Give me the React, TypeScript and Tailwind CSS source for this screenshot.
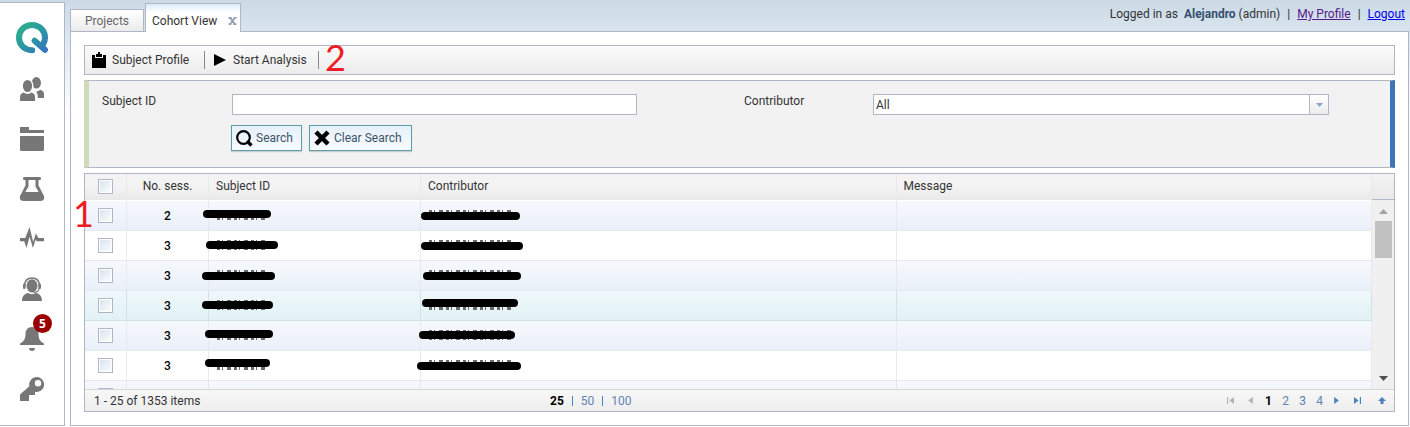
import type { ReactNode } from 'react';

type Mark = { left: number; top: number; width: number };
type Row = { sessions?: number; tone: string; subject?: Mark; contributor?: Mark };

const stripe = 'border-[#e6e9ee] bg-linear-to-b from-[#f5f9fd] to-[#eaf0f9]';
const plain = 'border-[#e9e9e9] bg-white';
const hovered = 'border-[#cfe3e6] bg-linear-to-b from-[#eff8fa] to-[#e1f1f5]';

// mark positions are relative to the top left corner of the cell
const rows: Row[] = [
  { sessions: 2, tone: stripe, subject: { left: -6, top: 9, width: 68 }, contributor: { left: 0, top: 11, width: 99 } },
  { sessions: 3, tone: plain, subject: { left: -3, top: 10, width: 72 }, contributor: { left: 0, top: 11, width: 102 } },
  { sessions: 3, tone: stripe, subject: { left: -7, top: 11, width: 73 }, contributor: { left: 2, top: 11, width: 98 } },
  { sessions: 3, tone: hovered, subject: { left: -7, top: 10, width: 71 }, contributor: { left: 1, top: 8, width: 96 } },
  { sessions: 3, tone: stripe, subject: { left: -4, top: 9, width: 68 }, contributor: { left: -2, top: 10, width: 96 } },
  { sessions: 3, tone: plain, subject: { left: -4, top: 8, width: 65 }, contributor: { left: -4, top: 11, width: 104 } },
  { tone: stripe },
];

function Redaction({ mark, length }: { mark: Mark; length: number }) {
  return (
    <>
      {/* traces of ink that show past the marker stroke */}
      <svg className="absolute top-[9px] left-[8px] h-[10px]" style={{ width: length }} stroke="#6b6b6b">
        <path d={`M0 5H${length}`} strokeWidth="10" strokeDasharray="3 2 1 4 4 3" />
      </svg>
      <span className="absolute h-2 rounded-full bg-black" style={mark} />
    </>
  );
}

function Check({ label }: { label: string }) {
  return (
    <input
      type="checkbox"
      aria-label={label}
      className="block size-[15px] appearance-none border border-[#b0b5c7] bg-linear-to-br from-[#d3e2ed] to-white shadow-[inset_0_0_0_1px_#fff] checked:bg-[#3b76ba]"
    />
  );
}

function NavLink({ label, children }: { label: string; children: ReactNode }) {
  return (
    <a href="#" aria-label={label} className="relative block size-6 text-[#777777]">
      <svg viewBox="0 0 24 24" className="size-6 overflow-visible" fill="currentColor">
        {children}
      </svg>
    </a>
  );
}

function Sidebar() {
  return (
    <nav className="flex w-[65px] shrink-0 flex-col items-center gap-[26px] border-y border-r border-[#b0b5c7] bg-white pt-[19px] pb-5">
      <a href="#" aria-label="Home" className="-mb-[3px] block h-8 w-8">
        <svg viewBox="0 0 32 32" className="size-8" fill="none" strokeLinecap="round">
          <defs>
            <linearGradient id="logo" gradientUnits="userSpaceOnUse" x1="6" y1="2" x2="30" y2="31">
              <stop offset="0.1" stopColor="#2bab8e" />
              <stop offset="0.5" stopColor="#2796a5" />
              <stop offset="1" stopColor="#3b6fc0" />
            </linearGradient>
          </defs>
          <path
            d="M16.2 28.2C8.6 28.2 3 22.8 3 15.8 3 8.5 8.6 3 16 3s13 5.5 13 12.8c0 2.6-.8 4.8-2 6.7M18.6 18.8l10.3 9"
            stroke="url(#logo)"
            strokeWidth="6"
          />
        </svg>
      </a>
      <NavLink label="Users">
        <ellipse cx="16.4" cy="5.8" rx="4.6" ry="5.8" />
        <path d="M17.8 24v-5.5c-.2-1.5-.7-2.8-1.8-3.8 2.3-.3 3.3-1.2 4.4-1.9 2 .7 3.6 1.9 3.6 4.4V21h-6.2z" />
        <ellipse cx="7.5" cy="9" rx="5.3" ry="6.8" stroke="#fff" strokeWidth="1.4" />
        <path d="M0 24v-3.5c0-3 1.5-4.2 3.5-4.9C6 17.4 9 17.4 11.500 15.600c2 .7 3.500 1.900 3.500 4.900V24z" />
      </NavLink>
      <NavLink label="Projects">
        <path d="M0 0h9v3h15v3H0zM0 9h24v13.500q0 1.500-1.500 1.500h-21Q0 24 0 22.500z" />
      </NavLink>
      <NavLink label="Laboratory">
        <path
          fillRule="evenodd"
          d="M4 0h16q1 0 1 1.500T20 3h-1.500v5.500l5 9.500c1.500 3 .5 6-3 6h-17c-3.500 0-4.500-3-3-6l5-9.500V3H4Q3 3 3 1.500T4 0zm4.500 3v6.500L5.300 15h13.400l-3.200-5.500V3z"
        />
      </NavLink>
      <NavLink label="Activity">
        <path d="M0 11h5.300L9.500 0l3.700 15 2.600-8.500L18.500 11H24v3.200h-7.300l-1-1.700L12.900 21 9.600 9.800 6.500 21l-2.300-6.800H0z" />
      </NavLink>
      <NavLink label="Support">
        <path d="M4.500 9.500C4.500 4 7.500 1 12 1s7.500 3 7.500 8.500" fill="none" stroke="currentColor" strokeWidth="1.600" />
        <ellipse cx="12" cy="8.800" rx="5.500" ry="6.600" />
        <rect x="3" y="6.500" width="2.600" height="5.500" rx="1.300" />
        <rect x="18.400" y="6.500" width="2.600" height="5.500" rx="1.300" />
        <path d="M19 11c0 3-2 4.500-5.500 4.500" fill="none" stroke="currentColor" strokeWidth="1.200" />
        <path d="M2 24c0-5 2.500-7.200 6-8 2.500 1.500 5.500 1.500 8 0 3.500.8 6 3 6 8z" />
      </NavLink>
      <a href="#" aria-label="Notifications" className="relative block size-6 text-[#777777]">
        <svg viewBox="0 0 24 24" className="size-6" fill="currentColor">
          <path d="M12 0c4 0 6.500 2.800 6.500 7 0 5.500 2 7.500 5.500 9.500V18H0v-1.500C3.500 14.500 5.500 12.500 5.500 7 5.500 2.800 8 0 12 0zM9 21h6c0 1.800-1.200 3-3 3s-3-1.200-3-3z" />
        </svg>
        <span className="absolute -top-[13px] left-[13px] flex size-[19px] items-center justify-center rounded-full bg-[#990000] font-['Open_Sans',sans-serif] text-xs font-bold text-white">
          5
        </span>
      </a>
      <NavLink label="Permissions">
        <path
          fillRule="evenodd"
          d="M16.500 0a7.500 7.500 0 1 1-1.500 14.800V18H9v6H0v-6.500l9.300-8.300A7.500 7.500 0 0 1 16.500 0zM18 3a3.200 3.200 0 1 0 0 6.400A3.200 3.200 0 0 0 18 3z"
        />
      </NavLink>
    </nav>
  );
}

function Header() {
  return (
    <header className="flex h-[31px] justify-between">
      <div className="flex items-end gap-px">
        <button className="h-[22px] w-[74px] border border-b-0 border-[#b0b5c7] bg-linear-to-b from-white to-[#ebebeb] text-[#666666]">
          Projects
        </button>
        <div className="relative z-10 -mb-px flex h-[29px] w-24 items-center justify-between border border-b-0 border-[#b0b5c7] bg-linear-to-b from-[#dcebfa] to-white to-30% pt-[5px] pr-[3px] pl-[6px]">
          <button className="text-left">Cohort View</button>
          <button aria-label="Close tab" className="text-[#949eb0]">
            <svg viewBox="0 0 10 10" className="h-2 w-[9px]" fill="none" stroke="currentColor" strokeWidth="2.200">
              <path d="M2 1l6 8M8 1l-6 8M0 1h4M6.500 1H10M0 9h3.500M6 9h4" />
            </svg>
          </button>
        </div>
      </div>
      <div className="flex h-7 items-center gap-[7px] pr-1">
        <span>
          Logged in as &nbsp;<b className="text-[#34506e]">Alejandro</b> (admin)
        </span>
        <span>|</span>
        <a href="#" className="text-[#551a8b] underline">My Profile</a>
        <span>|</span>
        <a href="#" className="text-[#0000ee] underline">Logout</a>
      </div>
    </header>
  );
}

function Toolbar() {
  return (
    <div className="flex h-[30px] items-center border border-[#b0b5c7] bg-linear-to-b from-[#fbfbfb] to-[#ececec] pl-[7px]">
      <button className="flex w-[112px] items-center gap-[6px]">
        <svg viewBox="0 0 14 16" className="h-4 w-[14px]">
          <path d="M0 3h3v3h8V3h3v13H0zM4 2h2V0h2v2h2v3H4z" />
        </svg>
        Subject Profile
      </button>
      <span className="h-[18px] w-px bg-[#888888]" />
      <button className="flex w-[113px] items-center gap-[7px] pl-[9px]">
        <svg viewBox="0 0 12 12" className="size-3">
          <path d="M0 0l12 6-12 6z" />
        </svg>
        Start Analysis
      </button>
      <span className="h-[18px] w-px bg-[#888888]" />
    </div>
  );
}

function SearchForm() {
  return (
    <form
      className="border-y border-r-[5px] border-l-[5px] border-y-[#b0b5c7] border-r-[#3b76ba] border-l-[#d0dabc] bg-[#f2f2f2] pt-[13px] pr-1 pb-4 pl-[13px]"
      onSubmit={(e) => e.preventDefault()}
    >
      <div className="grid grid-cols-2">
        <div className="flex items-start pr-[107px]">
          <label htmlFor="subject" className="w-[130px] shrink-0 leading-[14px]">Subject ID</label>
          <input id="subject" type="text" className="h-[21px] min-w-0 flex-1 border border-[#b0b5c7] bg-white px-1" />
        </div>
        <div className="flex items-start pr-[57px]">
          <label htmlFor="contributor" className="w-[129px] shrink-0 leading-[14px]">Contributor</label>
          <div className="relative h-[21px] min-w-0 flex-1">
            <select id="contributor" className="h-[21px] w-full appearance-none border border-[#b0b5c7] bg-white pl-[2px]">
              <option>All</option>
            </select>
            <span className="pointer-events-none absolute top-px right-px flex h-[19px] w-[19px] items-center justify-center border-l border-[#b0b5c7] bg-linear-to-b from-white to-[#ececec]">
              <svg viewBox="0 0 7 4" className="h-1 w-[7px]" fill="#8fa2c8">
                <path d="M0 0h7L3.500 4z" />
              </svg>
            </span>
          </div>
        </div>
      </div>
      <div className="mt-[10px] flex gap-[7px] pl-[129px] text-[#3c546a]">
        <button className="flex h-[26px] w-[71px] items-center gap-[3px] border border-[#5a9fad] bg-linear-to-b from-[#e6eff9] to-[#f8fbfe] pl-1 shadow-[0_1px_1px_#cccccc]">
          <svg viewBox="0 0 17 17" className="size-[17px]" fill="none" stroke="#000">
            <circle cx="7.500" cy="7.500" r="6.300" strokeWidth="2.200" />
            <path d="M11 11l4.500 4.500" strokeWidth="3.200" />
          </svg>
          Search
        </button>
        <button className="flex h-[26px] w-[103px] items-center gap-[4px] border border-[#5a9fad] bg-linear-to-b from-[#e6eff9] to-[#f8fbfe] pl-1 shadow-[0_1px_1px_#cccccc]">
          <svg viewBox="0 0 16 16" className="size-4" stroke="#000" strokeWidth="4.500">
            <path d="M2 2l12 12M14 2L2 14" />
          </svg>
          Clear Search
        </button>
      </div>
    </form>
  );
}

function Pager() {
  return (
    <div className="ml-auto flex items-center text-[#6381b3]">
      <button aria-label="First page" className="flex w-5 justify-center text-[#b4b4b4]">
        <svg viewBox="0 0 6 6" className="size-[7px]" fill="currentColor"><path d="M0 0h1v6H0zM6 0v6L2 3z" /></svg>
      </button>
      <button aria-label="Previous page" className="flex w-5 justify-center text-[#b4b4b4]">
        <svg viewBox="0 0 6 6" className="size-[7px]" fill="currentColor"><path d="M5 0v6L1 3z" /></svg>
      </button>
      <button className="w-[17px] font-bold text-black">1</button>
      <button className="w-[17px]">2</button>
      <button className="w-[17px]">3</button>
      <button className="w-[17px]">4</button>
      <button aria-label="Next page" className="flex w-[17px] justify-center text-[#4c82b5]">
        <svg viewBox="0 0 6 6" className="size-[7px]" fill="currentColor"><path d="M1 0v6l4-3z" /></svg>
      </button>
      <button aria-label="Last page" className="flex w-6 justify-center text-[#4c82b5]">
        <svg viewBox="0 0 6 6" className="size-[7px]" fill="currentColor"><path d="M5 0h1v6H5zM0 0v6l4-3z" /></svg>
      </button>
      <button aria-label="Back to top" className="flex w-[25px] justify-center text-[#4c82b5]">
        <svg viewBox="0 0 8 7" className="h-[7px] w-2" fill="currentColor"><path d="M4 0l4 4H5.500v3h-3V4H0z" /></svg>
      </button>
    </div>
  );
}

function SubjectGrid() {
  return (
    <div className="border border-[#b0b5c7] bg-white">
      <div className="flex h-[215px]">
        <div className="min-w-0 flex-1 overflow-hidden">
          <table className="w-full table-fixed border-separate border-spacing-0 text-left">
            <colgroup>
              <col className="w-[42px]" />
              <col className="w-[82px]" />
              <col className="w-[212px]" />
              <col />
              <col />
            </colgroup>
            <thead>
              <tr className="h-[27px] *:border-r *:border-r-[#e9e9e9] *:border-b *:border-b-white *:bg-linear-to-b *:from-[#f3f3f3] *:from-50% *:to-[#e9e9e9] *:pb-[2px] *:font-normal">
                <th className="pl-[13px]"><Check label="Select all" /></th>
                <th className="text-center">No. sess.</th>
                <th className="pl-[7px]">Subject ID</th>
                <th className="pl-[7px]">Contributor</th>
                <th className="pl-[7px]">Message</th>
              </tr>
            </thead>
            <tbody>
              {rows.map((row, i) => (
                <tr key={i} className={`h-[30px] *:border-r *:border-b *:border-inherit ${row.tone}`}>
                  <td className="pl-[13px]"><Check label={`Select row ${i + 1}`} /></td>
                  <td className="text-center font-medium text-black">{row.sessions}</td>
                  <td className="relative">{row.subject && <Redaction mark={row.subject} length={48} />}</td>
                  <td className="relative">{row.contributor && <Redaction mark={row.contributor} length={84} />}</td>
                  <td />
                </tr>
              ))}
            </tbody>
          </table>
        </div>
        <div className="flex w-[22px] flex-col bg-[#f0f0f0]">
          <div className="h-[26px] border-b border-[#b0b5c7] bg-linear-to-b from-[#f3f3f3] to-[#e9e9e9]" />
          <div className="flex flex-1 flex-col items-center pt-[9px] pb-2">
            <svg viewBox="0 0 9 5" className="h-[5px] w-[9px]" fill="#a3a3a3"><path d="M0 5h9L4.500 0z" /></svg>
            <div className="mt-[7px] h-[37px] w-[17px] bg-[#c1c1c1]" />
            <svg viewBox="0 0 9 5" className="mt-auto h-[5px] w-[9px]" fill="#505050"><path d="M0 0h9L4.500 5z" /></svg>
          </div>
        </div>
      </div>
      <div className="flex h-[22px] items-center border-t border-[#d5d5d5] bg-linear-to-b from-[#f8f8f8] to-[#ededed] pl-[9px]">
        <span className="w-[456px]">1 - 25 of 1353 items</span>
        <div className="flex items-center gap-2 text-[#6381b3]">
          <button className="font-bold text-black">25</button>
          <span className="h-[10px] w-px bg-[#4c82b5]" />
          <button>50</button>
          <span className="h-[10px] w-px bg-[#4c82b5]" />
          <button>100</button>
        </div>
        <Pager />
      </div>
    </div>
  );
}

export default function App() {
  return (
    <div className="bg-white bg-linear-to-b from-[#cbdae6] to-white to-[115px] pt-[2px] pb-px font-[Roboto,sans-serif] text-xs text-[#333333]">
      <div className="flex gap-[5px]">
        <Sidebar />
        <div className="-mt-[2px] min-w-0 flex-1 pr-px">
          <Header />
          <main className="relative flex flex-col gap-[5px] border border-[#b0b5c7] bg-white p-[13px]">
            <Toolbar />
            <SearchForm />
            <SubjectGrid />
            {/* Step callouts */}
            <span className="absolute top-1 left-[254px] font-[Lato,sans-serif] text-[36px] leading-[42px] text-[#ed1c24]">2</span>
            <span className="absolute top-[160px] left-[2px] font-[Lato,sans-serif] text-[36px] leading-[42px] text-[#ed1c24]">1</span>
          </main>
        </div>
      </div>
    </div>
  );
}
